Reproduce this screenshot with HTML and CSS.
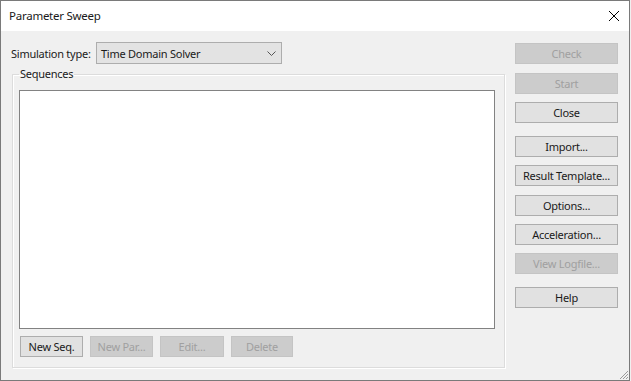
FILE: index.html
```html
<!DOCTYPE html>
<html>
<head>
<meta charset="utf-8">
<title>Parameter Sweep</title>
<link rel="stylesheet" href="styles.css">
</head>
<body>
<div class="window">
  <div class="titlebar">
    <span class="title">Parameter Sweep</span>
    <svg class="close-x" width="12" height="12" viewBox="0 0 12 12"><path d="M1 1 L11 11 M11 1 L1 11" stroke="#000" stroke-width="1" fill="none"/></svg>
  </div>
  <div class="content">
    <div class="left">
      <div class="typerow">
        <span class="label">Simulation type:</span>
        <div class="combo">
          <span>Time Domain Solver</span>
          <svg class="chev" width="9" height="5" viewBox="0 0 9 5"><path d="M0.5 0.5 L4.5 4.5 L8.5 0.5" stroke="#555" stroke-width="1" fill="none"/></svg>
        </div>
      </div>
      <fieldset class="group">
        <legend>Sequences</legend>
        <div class="listbox"></div>
        <div class="seqbtns">
          <button class="btn w63">New Seq.</button>
          <button class="btn dis w63">New Par...</button>
          <button class="btn dis w64">Edit...</button>
          <button class="btn dis w62">Delete</button>
        </div>
      </fieldset>
    </div>
    <div class="right">
      <button class="btn side dis">Check</button>
      <button class="btn side dis m9">Start</button>
      <button class="btn side m8">Close</button>
      <button class="btn side m13">Import...</button>
      <button class="btn side m8">Result Template...</button>
      <button class="btn side m9">Options...</button>
      <button class="btn side m8">Acceleration...</button>
      <button class="btn side dis m8">View Logfile...</button>
      <button class="btn side m13">Help</button>
    </div>
  </div>
  <svg class="grip" width="12" height="12" viewBox="0 0 12 12"><path d="M11 3 L3 11 M11 6 L6 11 M11 9 L9 11" stroke="#9a9a9a" stroke-width="1" fill="none"/></svg>
</div>
</body>
</html>
```
FILE: styles.css
```css
* { box-sizing: border-box; }
html, body { margin: 0; padding: 0; background: #f0f0f0; }
body {
  font-family: "Noto Sans", "Segoe UI", "Liberation Sans", sans-serif;
  font-size: 11px;
  letter-spacing: -0.25px;
  color: #1a1a1a;
}
.window {
  position: relative;
  width: 630px;
  height: 381px;
  border: 1px solid #7a7a7a;
  background: #f0f0f0;
  display: flex;
  flex-direction: column;
}
.titlebar {
  height: 30px;
  background: #fff;
  display: flex;
  align-items: center;
  padding-left: 8px;
  padding-right: 8px;
  flex: none;
}
.title { font-size: 11.5px; flex: 1; padding-bottom: 1px; }
.close-x { display: block; margin-right: 1px; margin-bottom: 1px; }
.content {
  display: flex;
  padding: 11px 0 0 10px;
}
.left { width: 494px; display: flex; flex-direction: column; }
.typerow { display: flex; align-items: center; height: 22px; }
.label { width: 85px; flex: none; }
.combo {
  width: 186px;
  height: 22px;
  background: #e3e3e3;
  border: 1px solid #adadad;
  display: flex;
  align-items: center;
  justify-content: space-between;
  padding: 0 5px 0 4px;
}
.chev { display: block; }
.group {
  margin: 2px 0 0 1px;
  width: 493px;
  height: 302px;
  border: 1px solid #dcdcdc;
  box-shadow: inset 1px 1px 0 #fff, 1px 1px 0 #fff;
  padding: 0 9px 0 6px;
  min-width: 0;
}
.group legend {
  padding: 0 1px;
  line-height: 16px;
  font-size: 11px;
}
.listbox {
  margin-top: 8px;
  width: 476px;
  height: 239px;
  background: #fff;
  border: 1px solid #828282;
}
.seqbtns {
  display: flex;
  gap: 7px;
  margin-top: 7px;
  padding-left: 1px;
}
.btn {
  font-family: inherit;
  font-size: 11px;
  letter-spacing: -0.25px;
  height: 21px;
  padding: 0;
  background: #e1e1e1;
  border: 1px solid #adadad;
  color: #1a1a1a;
  display: block;
  line-height: 18px;
}
.btn.dis {
  background: #cccccc;
  border-color: #c4c4c4;
  color: #a0a0a0;
}
.w62 { width: 62px; }
.w63 { width: 63px; }
.w64 { width: 64px; }
.right {
  margin-left: 10px;
  width: 103px;
  padding-top: 1px;
  display: flex;
  flex-direction: column;
}
.btn.side { width: 103px; }
.m8 { margin-top: 8px; }
.m9 { margin-top: 9px; }
.m13 { margin-top: 13px; }
.grip { position: absolute; right: 0; bottom: 0; display: block; }
```
